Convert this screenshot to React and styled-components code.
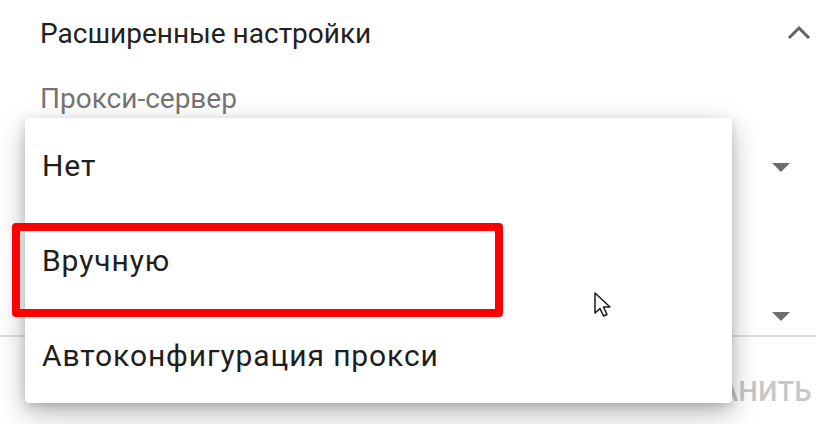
import React from "react";
import styled, { createGlobalStyle } from "styled-components";

const GlobalStyle = createGlobalStyle`
  html, body {
    margin: 0;
    padding: 0;
    background: #ffffff;
    overflow: hidden;
  }
  body {
    font-family: Roboto, "Noto Sans", "Liberation Sans", sans-serif;
  }
`;

const Page = styled.div`
  position: relative;
  width: 816px;
  height: 424px;
  overflow: hidden;
  background: #ffffff;
`;

const Panel = styled.div`
  display: flex;
  flex-direction: column;
  padding-left: 40px;
`;

const Header = styled.div`
  display: flex;
  align-items: center;
  justify-content: space-between;
  height: 66px;
  padding-right: 4px;
`;

const Title = styled.div`
  font-size: 28px;
  color: #212121;
`;

const Label = styled.div`
  font-size: 28px;
  color: #757575;
  height: 66px;
  line-height: 66px;
`;

const SelectRow = styled.div`
  display: flex;
  align-items: ${(p) => (p.$underline ? "flex-end" : "center")};
  justify-content: flex-end;
  height: ${(p) => p.$height}px;
  padding-right: 26px;
  padding-bottom: ${(p) => (p.$underline ? 14 : 0)}px;
  box-sizing: border-box;
  margin-left: -40px;
  border-bottom: ${(p) => (p.$underline ? "2px solid #dcdcdc" : "none")};
`;

const Arrow = styled.span`
  width: 0;
  height: 0;
  border-left: 9px solid transparent;
  border-right: 9px solid transparent;
  border-top: 9px solid #6e6e6e;
`;

const Footer = styled.div`
  display: flex;
  justify-content: flex-end;
  align-items: center;
  gap: 40px;
  height: 110px;
  padding-right: 4px;
`;

const FlatButton = styled.span`
  font-size: 27px;
  font-weight: 500;
  color: #c6c6c6;
  letter-spacing: 0.5px;
`;

const Menu = styled.ul`
  position: absolute;
  left: 25px;
  top: 118px;
  width: 707px;
  margin: 0;
  padding: 0;
  list-style: none;
  background: #ffffff;
  border-radius: 4px;
  box-shadow: 0 10px 28px rgba(0, 0, 0, 0.28), 0 3px 10px rgba(0, 0, 0, 0.14);
`;

const MenuItem = styled.li`
  display: flex;
  align-items: center;
  height: 95px;
  padding-left: 17px;
  font-size: 30px;
  letter-spacing: 0.9px;
  color: #1e1e1e;
`;

const Highlight = styled.div`
  position: absolute;
  left: 12px;
  top: 223px;
  width: 475px;
  height: 78px;
  border: 8px solid #ff0000;
  border-radius: 4px;
`;

const Cursor = styled.svg`
  position: absolute;
  left: 593px;
  top: 291px;
`;

function ChevronUp() {
  return (
    <svg width="26" height="18" viewBox="0 0 26 18">
      <path d="M3 14 L13 4 L23 14" fill="none" stroke="#626262" strokeWidth="3" />
    </svg>
  );
}

export default function App() {
  return (
    <Page>
      <GlobalStyle />
      <Panel>
        <Header>
          <Title>Расширенные настройки</Title>
          <ChevronUp />
        </Header>
        <Label>Прокси-сервер</Label>
        <SelectRow $height={70}>
          <Arrow />
        </SelectRow>
        <SelectRow $height={135} $underline>
          <Arrow />
        </SelectRow>
        <Footer>
          <FlatButton>ОТМЕНА</FlatButton>
          <FlatButton>СОХРАНИТЬ</FlatButton>
        </Footer>
      </Panel>
      <Menu>
        <MenuItem>Нет</MenuItem>
        <MenuItem>Вручную</MenuItem>
        <MenuItem>Автоконфигурация прокси</MenuItem>
      </Menu>
      <Highlight />
      <Cursor width="22" height="28" viewBox="0 0 22 28">
        <path
          d="M2 2 L2 22 L7 17.5 L10.5 25 L14 23.5 L10.5 16 L17 16 Z"
          fill="#ffffff"
          stroke="#1a1a1a"
          strokeWidth="1.5"
          strokeLinejoin="round"
        />
      </Cursor>
    </Page>
  );
}
